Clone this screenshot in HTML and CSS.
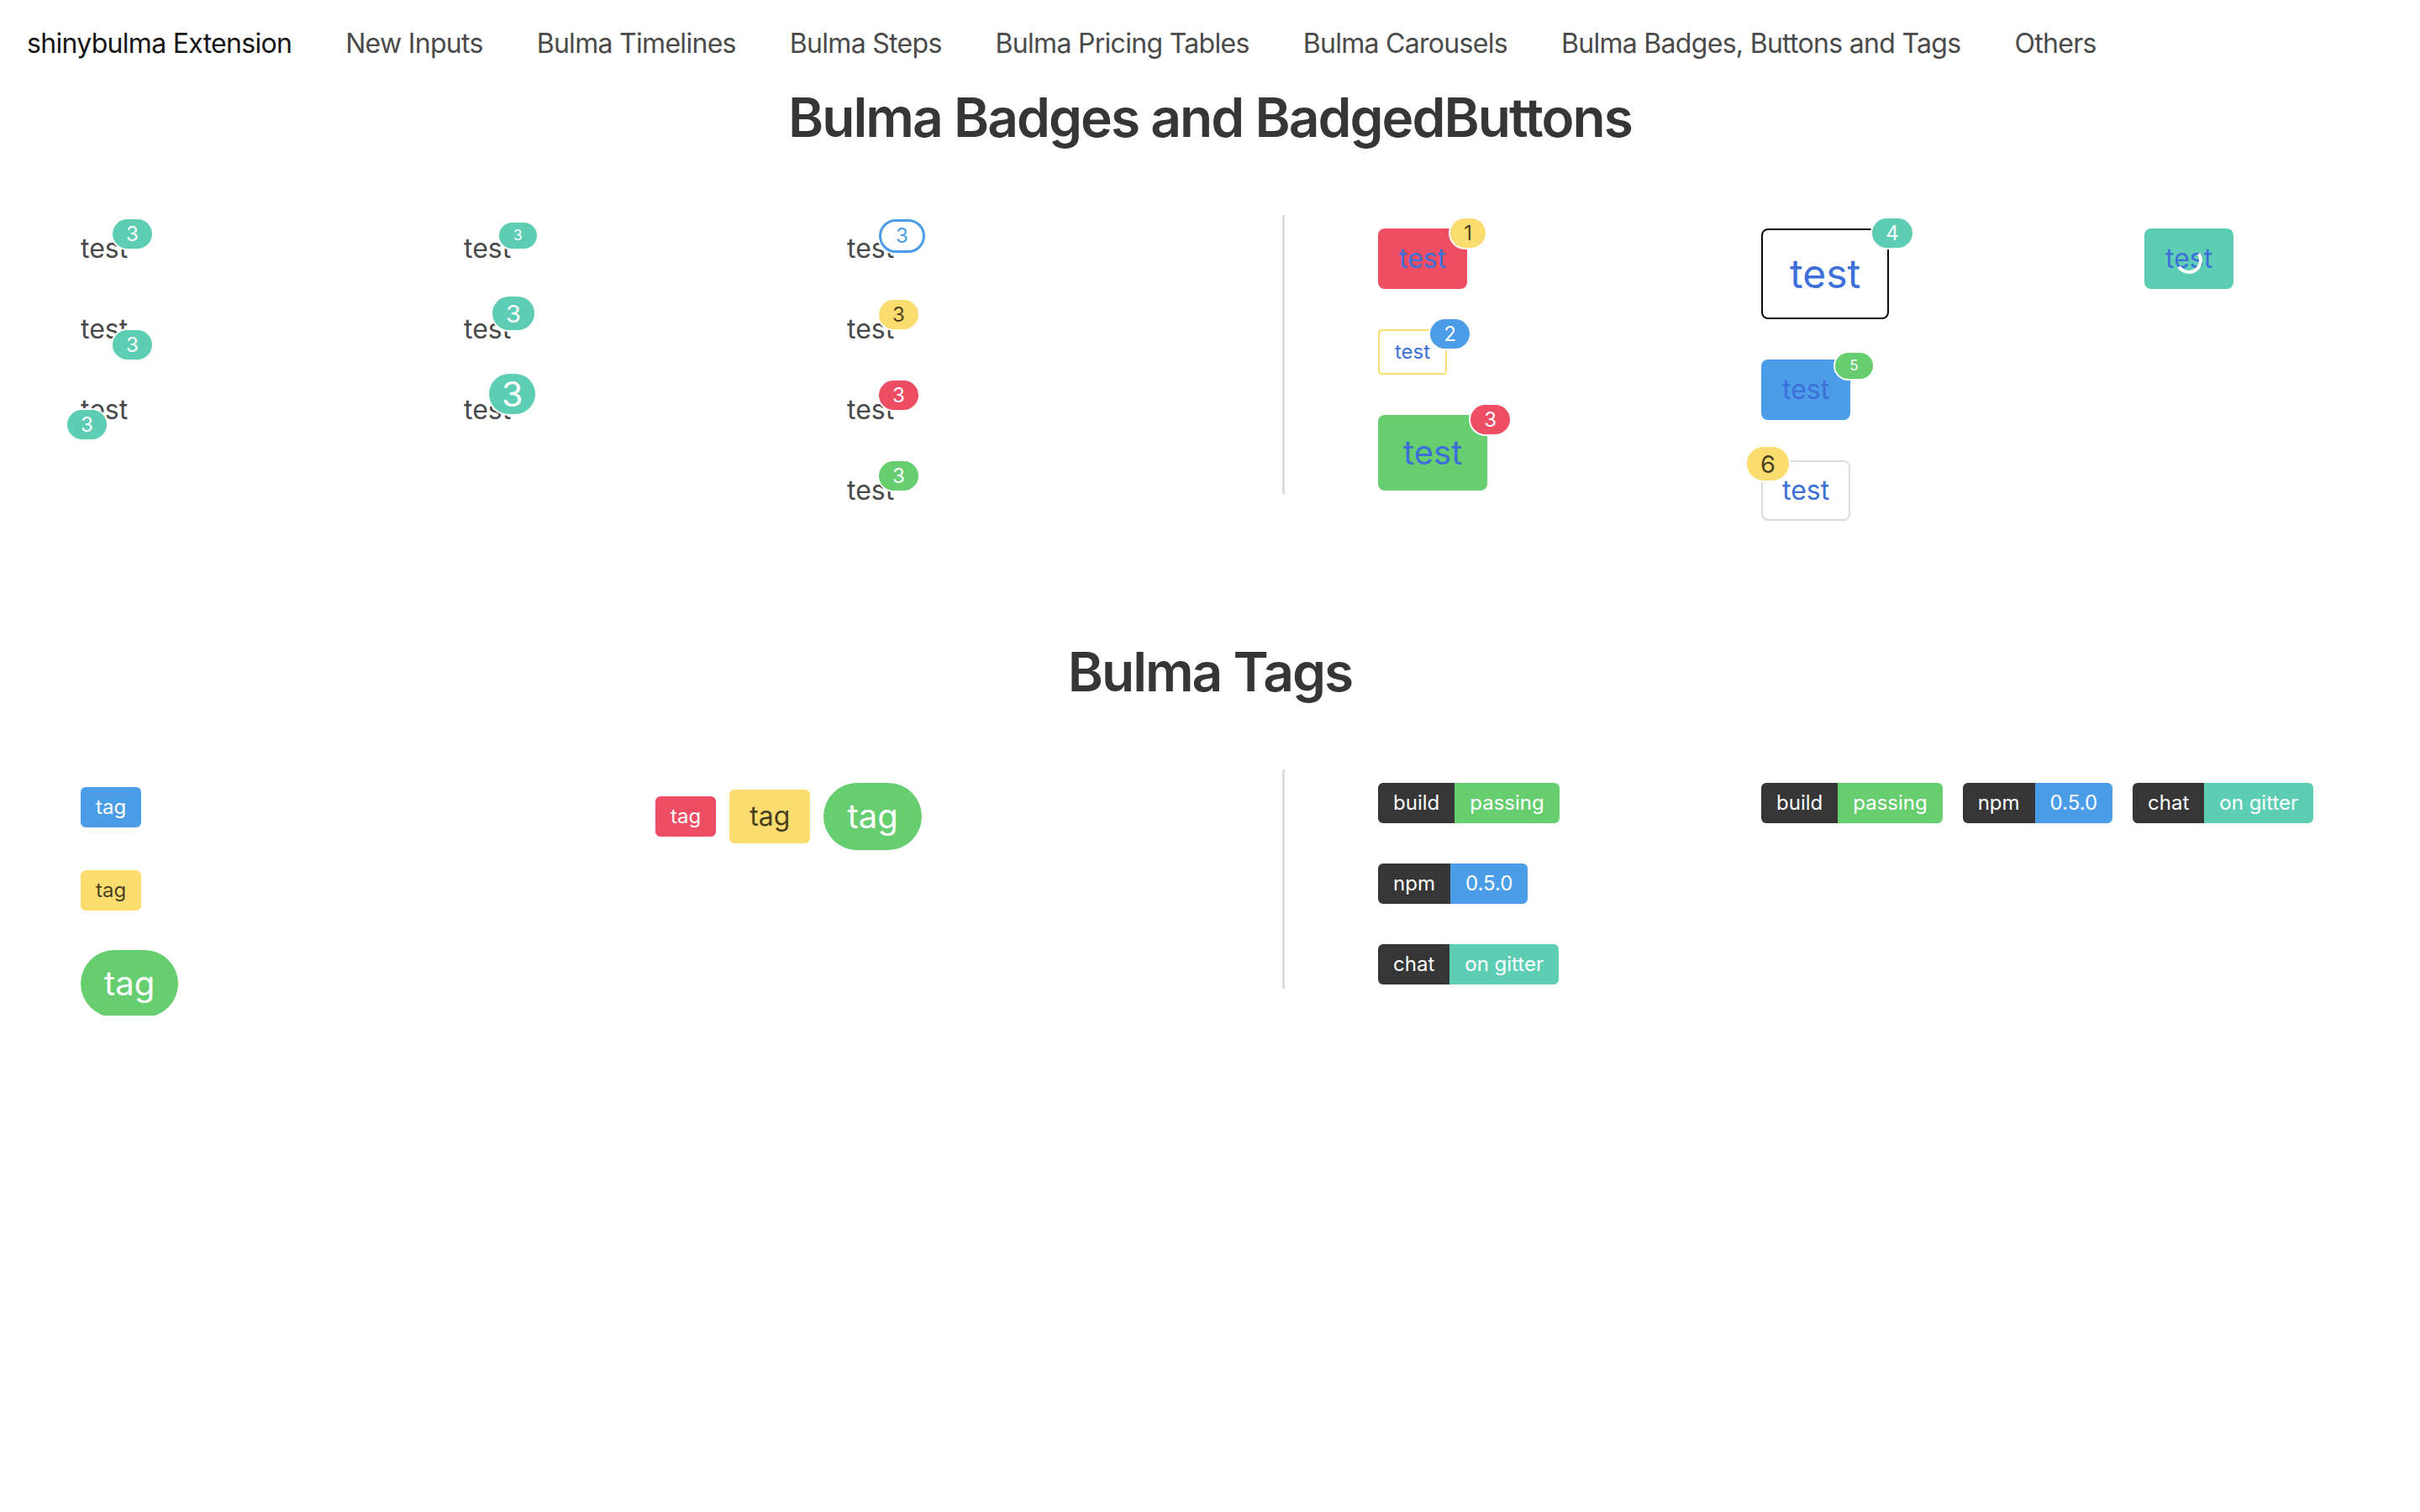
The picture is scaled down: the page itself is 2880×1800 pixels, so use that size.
FILE: index.html
```html
<!DOCTYPE html>
<html lang="en">
<head>
<meta charset="utf-8">
<title>shinybulma Extension</title>
<link rel="stylesheet" href="styles.css">
</head>
<body>
<nav class="navbar">
  <a class="nav-item brand">shinybulma Extension</a>
  <a class="nav-item">New Inputs</a>
  <a class="nav-item">Bulma Timelines</a>
  <a class="nav-item">Bulma Steps</a>
  <a class="nav-item">Bulma Pricing Tables</a>
  <a class="nav-item">Bulma Carousels</a>
  <a class="nav-item">Bulma Badges, Buttons and Tags</a>
  <a class="nav-item">Others</a>
</nav>

<main>
  <h1 class="title">Bulma Badges and BadgedButtons</h1>

  <div class="split split-badges">
    <div class="half grid-3">
      <div class="col text-col">
        <div class="row"><span class="badged">test<span class="badge teal pos-tr">3</span></span></div>
        <div class="row"><span class="badged">test<span class="badge teal pos-br">3</span></span></div>
        <div class="row"><span class="badged">test<span class="badge teal pos-bl">3</span></span></div>
      </div>
      <div class="col text-col">
        <div class="row"><span class="badged">test<span class="badge teal is-small pos-tr-s">3</span></span></div>
        <div class="row"><span class="badged">test<span class="badge teal is-medium pos-tr-m">3</span></span></div>
        <div class="row"><span class="badged">test<span class="badge teal is-large pos-tr-l">3</span></span></div>
      </div>
      <div class="col text-col">
        <div class="row"><span class="badged">test<span class="badge outlined pos-tr">3</span></span></div>
        <div class="row"><span class="badged">test<span class="badge yellow pos-tr">3</span></span></div>
        <div class="row"><span class="badged">test<span class="badge red pos-tr">3</span></span></div>
        <div class="row"><span class="badged">test<span class="badge green pos-tr">3</span></span></div>
      </div>
    </div>

    <div class="vdivider"><div class="vline"></div></div>

    <div class="half grid-right">
      <div class="col btn-col">
        <span class="btn bg-red">test<span class="badge yellow btn-tr">1</span></span>
        <span class="btn is-small line-yellow">test<span class="badge blue btn-tr">2</span></span>
        <span class="btn is-medium bg-green">test<span class="badge red btn-tr">3</span></span>
      </div>
      <div class="col btn-col">
        <span class="btn is-large line-black">test<span class="badge teal btn-tr">4</span></span>
        <span class="btn bg-blue">test<span class="badge green is-small btn-tr-s">5</span></span>
        <span class="btn line-grey">test<span class="badge yellow is-medium btn-tl-m">6</span></span>
      </div>
      <div class="col btn-col">
        <span class="btn bg-teal">test<span class="loader"></span></span>
      </div>
    </div>
  </div>

  <h1 class="title title-tags">Bulma Tags</h1>

  <div class="split split-tags">
    <div class="half grid-2">
      <div class="col tag-stack">
        <span class="tag bg-blue first">tag</span>
        <span class="tag bg-yellow second">tag</span>
        <span class="tag is-large is-rounded bg-green third">tag</span>
      </div>
      <div class="col">
        <div class="tags">
          <span class="tag bg-red">tag</span>
          <span class="tag is-medium bg-yellow">tag</span>
          <span class="tag is-large is-rounded bg-green">tag</span>
        </div>
      </div>
    </div>

    <div class="vdivider"><div class="vline"></div></div>

    <div class="half grid-right-2">
      <div class="col addon-stack">
        <div class="addons"><span class="tag bg-dark">build</span><span class="tag bg-green">passing</span></div>
        <div class="addons"><span class="tag bg-dark">npm</span><span class="tag bg-blue">0.5.0</span></div>
        <div class="addons"><span class="tag bg-dark">chat</span><span class="tag bg-teal">on gitter</span></div>
      </div>
      <div class="col">
        <div class="addon-row">
          <div class="addons"><span class="tag bg-dark">build</span><span class="tag bg-green">passing</span></div>
          <div class="addons"><span class="tag bg-dark">npm</span><span class="tag bg-blue">0.5.0</span></div>
          <div class="addons"><span class="tag bg-dark">chat</span><span class="tag bg-teal">on gitter</span></div>
        </div>
      </div>
    </div>
  </div>
</main>
</body>
</html>
```

FILE: styles.css
```css
html, body {
  margin: 0;
  padding: 0;
  background: #ffffff;
}

body {
  width: 2880px;
  overflow: hidden;
  font-family: "Inter", "Noto Sans", "Liberation Sans", sans-serif;
  font-size: 32px;
  line-height: 48px;
  color: #4a4a4a;
}

/* ---------- navbar ---------- */
.navbar {
  display: flex;
  align-items: center;
  height: 104px;
}

.nav-item {
  padding: 0 32px;
  font-size: 32px;
  letter-spacing: -0.7px;
  color: #4a4a4a;
  white-space: nowrap;
}

.nav-item.brand {
  color: #141414;
}

/* ---------- titles ---------- */
.title {
  margin: 0 0 48px;
  font-size: 64px;
  line-height: 72px;
  font-weight: 600;
  letter-spacing: -1.95px;
  color: #363636;
  text-align: center;
}

.title-tags {
  margin-top: 144px;
}

/* ---------- split layout ---------- */
.split {
  display: flex;
  padding-left: 72px;
}

.split-tags {
  height: 325px;
}

.half {
  display: grid;
  flex: none;
}

.grid-3 {
  width: 1368px;
  grid-template-columns: repeat(3, 456px);
}

.grid-2 {
  width: 1368px;
  grid-template-columns: repeat(2, 684px);
}

.grid-right {
  width: 1264px;
  grid-template-columns: 456px 456px 352px;
}

.grid-right-2 {
  width: 1264px;
  grid-template-columns: 456px 808px;
}

.col {
  padding: 0 24px;
  min-width: 0;
}

.vdivider {
  flex: none;
  width: 176px;
  display: flex;
  justify-content: center;
  padding: 32px 0;
  box-sizing: border-box;
}

.vline {
  width: 3px;
  margin-left: -1px;
  background: #dbdbdb;
}

/* ---------- badged text ---------- */
.text-col {
  padding-top: 48px;
}

.row {
  height: 48px;
  margin-bottom: 48px;
  white-space: nowrap;
}

.row:last-child {
  margin-bottom: 0;
}

.badged {
  position: relative;
}

.badge {
  position: absolute;
  display: inline-flex;
  align-items: center;
  justify-content: center;
  box-sizing: border-box;
  height: 35px;
  min-width: 35px;
  padding: 0 16px;
  border-radius: 18px;
  font-size: 24px;
  line-height: 1;
  font-weight: 400;
  letter-spacing: 0;
  color: #ffffff;
  box-shadow: 0 0 0 2px #ffffff;
  white-space: nowrap;
}

.badge.is-small {
  height: 31px;
  padding: 0 17px;
  border-radius: 16px;
  font-size: 17px;
}

.badge.is-medium {
  height: 40px;
  padding: 0 16px;
  border-radius: 20px;
  font-size: 29px;
}

.badge.is-large {
  height: 48px;
  padding: 0 15px;
  border-radius: 24px;
  font-size: 41px;
}

.badge.outlined {
  height: 40px;
  padding: 0 17px;
  border: 3px solid #4a9de6;
  border-radius: 20px;
  background: #ffffff;
  color: #4a9de6;
}

.badge.teal { background: #5dceb4; }
.badge.red { background: #ee4e64; }
.badge.green { background: #66ce6f; }
.badge.blue { background: #4a9de6; }
.badge.yellow { background: #fbdc6f; color: rgba(0, 0, 0, 0.72); }

.pos-tr { left: 38px; top: -15px; }
.pos-br { left: 38px; top: 21px; }
.pos-bl { left: -16px; top: 20px; }
.pos-tr-s { left: 42px; top: -11px; }
.pos-tr-m { left: 34px; top: -19px; }
.pos-tr-l { left: 30px; top: -23px; }

/* ---------- buttons ---------- */
.btn-col {
  display: flex;
  flex-direction: column;
  align-items: flex-start;
  gap: 48px;
  padding-top: 48px;
}

.btn {
  position: relative;
  display: inline-flex;
  align-items: center;
  justify-content: center;
  box-sizing: border-box;
  height: 72px;
  padding: 0 23px;
  border: 2px solid transparent;
  border-radius: 8px;
  font-size: 32px;
  line-height: 1;
  color: #3d6fd8;
  background: #ffffff;
  white-space: nowrap;
}

.btn.is-small {
  height: 54px;
  padding: 0 18px;
  border-radius: 4px;
  font-size: 24px;
}

.btn.is-medium {
  height: 90px;
  padding: 0 28px;
  font-size: 40px;
}

.btn.is-large {
  height: 108px;
  padding: 0 32px;
  font-size: 48px;
}

.btn.bg-red { background: #ee4e64; }
.btn.bg-green { background: #66ce6f; }
.btn.bg-blue { background: #4a9de6; }
.btn.bg-teal { background: #5dceb4; }
.btn.line-yellow { border-color: #fbdc6f; }
.btn.line-black { border-color: #0a0a0a; }
.btn.line-grey { border-color: #dbdbdb; }

.btn-tr { left: calc(100% - 18px); top: -14px; }
.btn-tr-s { left: calc(100% - 16px); top: -10px; }
.btn-tl-m { left: -19px; top: -18px; }

.loader {
  position: absolute;
  left: calc(50% - 16px);
  top: calc(50% - 14px);
  width: 32px;
  height: 32px;
  box-sizing: border-box;
  border: 4px solid #ffffff;
  border-top-color: transparent;
  border-left-color: transparent;
  border-radius: 50%;
  transform: rotate(12deg);
}

/* ---------- tags ---------- */
.tag {
  display: inline-flex;
  align-items: center;
  justify-content: center;
  box-sizing: border-box;
  height: 48px;
  padding: 0 18px;
  border-radius: 6px;
  font-size: 24px;
  line-height: 1;
  color: #ffffff;
  white-space: nowrap;
}

.tag.is-medium {
  height: 64px;
  padding: 0 24px;
  font-size: 32px;
}

.tag.is-large {
  height: 80px;
  padding: 0 28px;
  font-size: 40px;
}

.tag.is-rounded {
  border-radius: 40px;
}

.tag.bg-blue { background: #4a9de6; }
.tag.bg-yellow { background: #fbdc6f; color: rgba(0, 0, 0, 0.72); }
.tag.bg-green { background: #66ce6f; }
.tag.bg-red { background: #ee4e64; }
.tag.bg-teal { background: #5dceb4; }
.tag.bg-dark { background: #363636; }

.tag-stack {
  display: flex;
  flex-direction: column;
  align-items: flex-start;
}

.tag-stack .first { margin-top: 53px; }
.tag-stack .second { margin-top: 51px; }
.tag-stack .third { margin-top: 47px; }

.tags {
  display: flex;
  align-items: center;
  gap: 16px;
  padding-top: 48px;
}

.addon-stack {
  display: flex;
  flex-direction: column;
  align-items: flex-start;
  gap: 48px;
  padding-top: 48px;
}

.addon-row {
  display: flex;
  gap: 24px;
  padding-top: 48px;
}

.addons {
  display: flex;
}

.addons .tag:first-child {
  border-radius: 6px 0 0 6px;
}

.addons .tag:last-child {
  border-radius: 0 6px 6px 0;
}
```
